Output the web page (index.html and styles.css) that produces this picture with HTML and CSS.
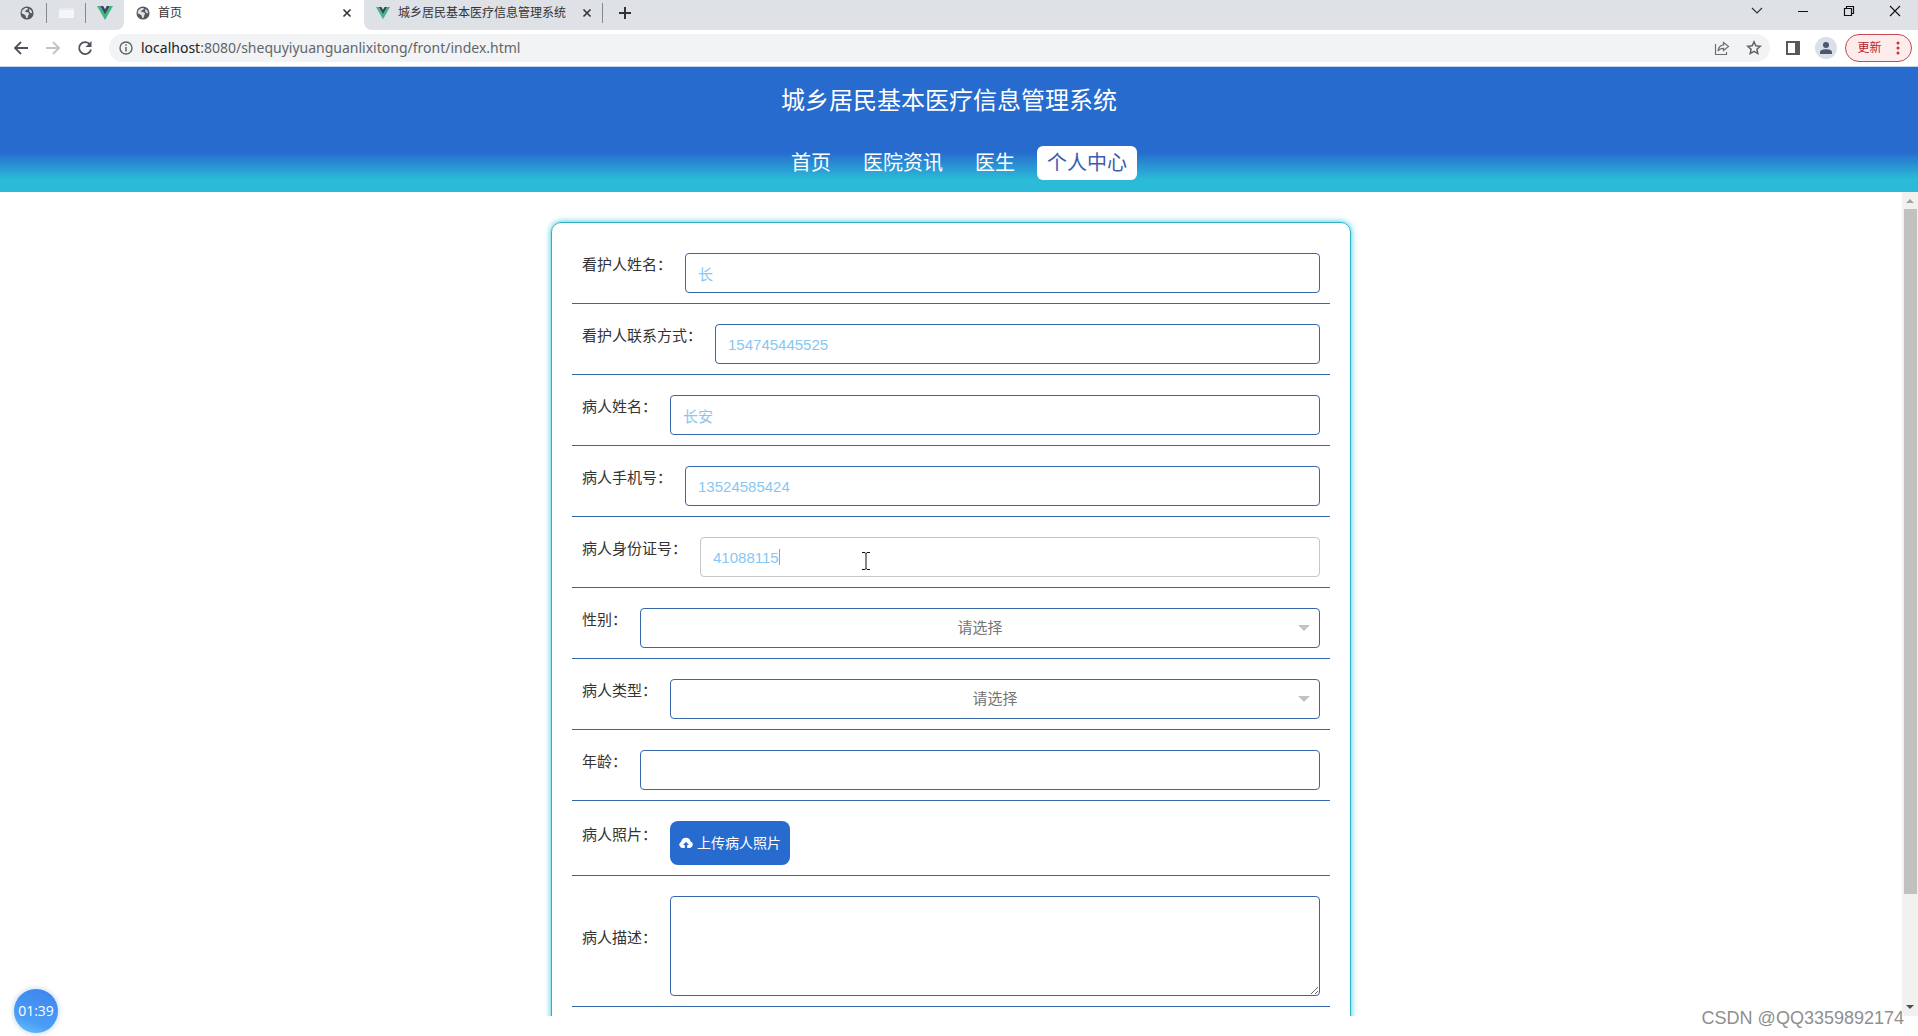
FILE: index.html
```html
<!DOCTYPE html>
<html lang="zh-CN">
<head>
<meta charset="utf-8">
<title>首页</title>
<link rel="stylesheet" href="styles.css">
</head>
<body>
<svg class="defs" aria-hidden="true">
  <symbol id="globe" viewBox="0 0 16 16"><circle cx="8" cy="8" r="7.5" fill="#565a5e"/><path d="M3 4.500 6 2.300 9 2.200 8.500 4 6.300 5.200 6 6.800 9 7 10.500 8.600 9.500 10.500 8.500 13.600 7 13.800 6.600 11 4.500 9.500 2 8.500 2 6.500ZM10.500 3 13 5 13.900 8 12.500 8.300 10.600 6.500Z" fill="#dee1e6"/></symbol>
  <symbol id="vue" viewBox="0 0 16 14"><path d="M0 0h3.200L8 8.300 12.800 0H16L8 14Z" fill="#41b883"/><path d="M3.200 0H6.200L8 3.200 9.800 0h3L8 8.400Z" fill="#34495e"/></symbol>
  <symbol id="close" viewBox="0 0 10 10"><path d="M1.500 1.500 8.500 8.500M8.500 1.500 1.500 8.500" stroke="#333" stroke-width="1.600"/></symbol>
</svg>

<div class="tabstrip">
  <div class="pins">
    <div class="pin"><svg class="i14"><use href="#globe"/></svg></div>
    <div class="pin"><span class="blank"></span></div>
    <div class="pin"><svg class="i16"><use href="#vue"/></svg></div>
  </div>
  <div class="tab active">
    <svg class="i14"><use href="#globe"/></svg><span>首页</span>
    <button aria-label="关闭"><svg class="i10"><use href="#close"/></svg></button>
  </div>
  <div class="tab">
    <svg class="i14"><use href="#vue"/></svg><span>城乡居民基本医疗信息管理系统</span>
    <button aria-label="关闭"><svg class="i10"><use href="#close"/></svg></button>
  </div>
  <button class="newtab" aria-label="新标签页"><svg class="i14" viewBox="0 0 14 14"><path d="M7 1v12M1 7h12" stroke="#333" stroke-width="2"/></svg></button>
  <div class="window-controls">
    <button aria-label="搜索标签页"><svg class="i12" viewBox="0 0 12 12"><path d="M1 3l5 5 5-5" fill="none" stroke="#333" stroke-width="1.200"/></svg></button>
    <button aria-label="最小化"><svg class="i12" viewBox="0 0 12 12"><path d="M1 6.500h10" stroke="#111"/></svg></button>
    <button aria-label="还原"><svg class="i12" viewBox="0 0 12 12"><path d="M1.500 3.500h7v7h-7zM3.500 3.500v-2h7v7h-2" fill="none" stroke="#111" stroke-width="1.200"/></svg></button>
    <button aria-label="关闭窗口"><svg class="i12" viewBox="0 0 12 12"><path d="M1 1l10 10M11 1 1 11" stroke="#111" stroke-width="1.100"/></svg></button>
  </div>
</div>

<div class="toolbar">
  <button aria-label="后退"><svg class="i16" viewBox="0 0 16 16"><path d="M15 8H2M8 2 2 8l6 6" fill="none" stroke="#50545a" stroke-width="1.800"/></svg></button>
  <button aria-label="前进"><svg class="i16" viewBox="0 0 16 16"><path d="M1 8h13M8 2l6 6-6 6" fill="none" stroke="#c0c2c5" stroke-width="1.800"/></svg></button>
  <button aria-label="刷新"><svg class="i16" viewBox="0 0 16 16"><path d="M13 4.500A6 6 0 1 0 14 9.500" fill="none" stroke="#50545a" stroke-width="1.800"/><path d="M14.500 1v6h-6z" fill="#50545a"/></svg></button>
  <div class="address">
    <svg class="i14" viewBox="0 0 14 14"><circle cx="7" cy="7" r="6" fill="none" stroke="#5f6368" stroke-width="1.400"/><path d="M7 6v4.500M7 3.300v1.500" stroke="#5f6368" stroke-width="1.500"/></svg>
    <span class="url"><b>localhost</b>:8080/shequyiyuanguanlixitong/front/index.html</span>
    <button aria-label="分享"><svg class="i16" viewBox="0 0 16 16"><path d="M1.500 4v10.500h11V12M9.500 2.500 14.500 6.500l-5 4V8.300C6.500 8.300 5 9.500 4 11c.3-3 2-5.800 5.500-6.200z" fill="none" stroke="#6b6e72" stroke-width="1.200"/></svg></button>
    <button aria-label="收藏"><svg class="i16" viewBox="0 0 16 16"><path d="m8 1.800 1.800 4 4.400.5-3.300 2.900.9 4.400L8 11.400l-3.800 2.200.9-4.400-3.300-2.900 4.400-.5z" fill="none" stroke="#5f6368" stroke-width="1.500"/></svg></button>
  </div>
  <button aria-label="侧边栏"><svg class="i14" viewBox="0 0 14 14"><path d="M1 1h12v12H1z" fill="#fff" stroke="#55585c" stroke-width="2"/><path d="M9 1h4v12H9z" fill="#55585c"/></svg></button>
  <button class="avatar" aria-label="用户"><svg class="i14" viewBox="0 0 14 14"><circle cx="7" cy="4" r="3" fill="#4c566e"/><path d="M1 13v-1.500C1 9 4 8.300 7 8.300s6 .7 6 3.200V13z" fill="#4c566e"/></svg></button>
  <button class="update">更新<svg class="dots" viewBox="0 0 4 14"><circle cx="2" cy="2" r="1.500"/><circle cx="2" cy="7" r="1.500"/><circle cx="2" cy="12" r="1.500"/></svg></button>
</div>

<header class="site-header">
  <h1>城乡居民基本医疗信息管理系统</h1>
  <nav>
    <a href="#">首页</a><a href="#">医院资讯</a><a href="#">医生</a><a href="#" class="current">个人中心</a>
  </nav>
</header>

<div class="viewport">
  <main>
    <form class="card">
      <div class="row"><label for="guardian">看护人姓名：</label><input id="guardian" type="text" value="长"></div>
      <div class="row"><label for="contact">看护人联系方式：</label><input id="contact" type="text" value="154745445525"></div>
      <div class="row"><label for="patient">病人姓名：</label><input id="patient" type="text" value="长安"></div>
      <div class="row"><label for="phone">病人手机号：</label><input id="phone" type="text" value="13524585424"></div>
      <div class="row"><label for="idcard">病人身份证号：</label><div class="control editing"><input id="idcard" type="text" value="41088115"><span class="caret"></span>
        <svg class="ibeam" viewBox="0 0 8 18"><path d="M0 .5h3l1 1 1-1h3M4 1v16M0 17.500h3l1-1 1 1h3" fill="none" stroke="#111"/></svg></div></div>
      <div class="row"><label for="gender">性别：</label><div class="control choice"><select id="gender"><option>请选择</option></select></div></div>
      <div class="row"><label for="type">病人类型：</label><div class="control choice"><select id="type"><option>请选择</option></select></div></div>
      <div class="row"><label for="age">年龄：</label><input id="age" type="text"></div>
      <div class="row photo"><label for="photo">病人照片：</label><button id="photo" class="upload" type="button"><svg class="i14" viewBox="0 0 14 14"><path d="M3.500 12A3.300 3.300 0 0 1 2.200 5.700 4.800 4.800 0 0 1 11.600 5.600 3.300 3.300 0 0 1 10.800 12H8.200V9H10L7 5.800 4 9h1.800v3z" fill="#fff"/></svg>上传病人照片</button></div>
      <div class="row tall"><label for="desc">病人描述：</label><textarea id="desc"></textarea></div>
      <div class="row"></div>
    </form>
  </main>
  <div class="scrollbar"><i class="up"></i><i class="thumb"></i><i class="down"></i></div>
</div>

<div class="timer">01:39</div>
<div class="watermark">CSDN @QQ3359892174</div>
</body>
</html>
```

FILE: styles.css
```css
* { box-sizing: border-box; }
body {
  margin: 0;
  height: 100vh;
  padding-bottom: 20px;
  display: flex;
  flex-direction: column;
  overflow: hidden;
  background: #fff;
  color: #333;
  font: 15px/24px "Liberation Sans", "Noto Sans CJK SC", sans-serif;
}
button { border: 0; padding: 0; background: none; font: inherit; color: inherit; display: flex; align-items: center; justify-content: center; }
svg { flex: none; display: block; }
.defs { position: absolute; width: 0; height: 0; }
.i10 { width: 10px; height: 10px; }
.i12 { width: 12px; height: 12px; }
.i14 { width: 14px; height: 14px; }
.i16 { width: 16px; height: 16px; }

/* browser tabs */
.tabstrip { flex: none; height: 30px; display: flex; background: #fff; }
.tabstrip > * { background: #dee1e6; }
.pins { display: flex; align-items: center; padding: 0 0 4px 7px; border-radius: 0 0 8px 0; }
.pin { width: 39px; height: 20px; display: flex; align-items: center; justify-content: center; }
.pin + .pin { border-left: 1px solid #85888c; }
.blank { width: 15px; height: 10px; background: #f4f6f7; border-top: 2px solid #e8eaed; }
.tab { width: 240px; display: flex; align-items: center; gap: 8px; padding: 0 12px 4px 12px; font-size: 12px; }
.tab.active { background: #fff; }
.tab button { margin-left: auto; }
.tab:not(.active) { border-radius: 0 0 0 8px; }
.tab span { white-space: nowrap; }
.newtab { padding: 0 14px 4px; }
.newtab::before { content: ""; height: 20px; border-left: 1px solid #85888c; margin-right: 15px; margin-left: -16px; }
.window-controls { flex: 1; display: flex; justify-content: flex-end; padding-bottom: 8px; }
.window-controls button { width: 46px; }

/* browser toolbar */
.toolbar { flex: none; height: 37px; display: flex; align-items: center; gap: 16px; padding: 0 6px 0 13px; border-bottom: 1px solid #c3d3ea; }
.address { flex: 1; height: 28px; display: flex; align-items: center; gap: 16px; padding: 0 8px; border-radius: 14px; background: #f1f3f4; }
.address .i14 { margin-left: 2px; }
.url { flex: 1; margin-left: -8px; font: 14px/24px "Noto Sans", sans-serif; color: #62666b; }
.url b { font-weight: 400; color: #222; }
.avatar { width: 22px; height: 22px; margin: 0 -8px 0 -1px; border-radius: 50%; background: #dadfe8; }
.update { height: 28px; width: 67px; gap: 14px; border: 1px solid #c5474f; border-radius: 14px; background: #fdecec; color: #b3262e; font-size: 12px; }
.dots { width: 4px; height: 14px; fill: #c5343c; }

/* site header */
.site-header { flex: none; height: 125px; display: flex; flex-direction: column; align-items: center; justify-content: space-between; padding: 17px 0 12px; background: linear-gradient(#276bce 0, #276bce 68%, #2bbbd8 90%); color: #fff; }
.site-header h1 { margin: 0 20px 0 0; font-size: 24px; line-height: 34px; font-weight: 400; }
.site-header nav { display: flex; gap: 12px; }
.site-header a { padding: 0 10px; border-radius: 6px; font-size: 20px; line-height: 34px; color: #fff; text-decoration: none; }
.site-header .current { background: #fff; color: #3d5cae; }

/* page area */
.viewport { flex: 1; min-height: 0; display: flex; }
main { flex: 1; overflow: hidden; padding-top: 30px; }
.card { width: 42%; min-width: 800px; margin: 0 auto; padding: 10px 20px; border: 1px solid #2fb0c4; border-radius: 10px; box-shadow: 0 0 6px #2bc4dc; }
.row { display: flex; align-items: flex-start; gap: 13px; min-height: 71px; padding: 20px 10px 10px; border-bottom: 1px solid #3768a8; }
.row label { flex: none; }
.photo label { padding-top: 2px; }
.tall label { padding-top: 30px; }
.row > input, .control, .row > textarea { flex: 1; min-width: 0; }
input, select, textarea { display: block; width: 100%; height: 40px; padding: 0 12px; border: 1px solid #3768a8; border-radius: 4px; outline: 0; background: #fff; color: #87c7f3; font: inherit; }
textarea { height: 100px; resize: vertical; }
.control { position: relative; }
.editing input { border-color: #c4c6ca; }
.caret { position: absolute; left: 79px; top: 12px; height: 16px; border-left: 1px solid #6aaede; }
.ibeam { position: absolute; left: 162px; top: 15px; width: 8px; height: 18px; }
select { appearance: none; text-align: center; text-align-last: center; color: #757575; }
.choice::after { content: ""; position: absolute; right: 10px; top: 17px; border: 6px solid transparent; border-top-color: #c2c2c2; border-bottom: 0; }
.upload { height: 44px; padding: 0 9px; gap: 4px; border-radius: 8px; background: #276bce; color: #fff; font-size: 14px; }

.scrollbar { width: 16px; display: flex; flex-direction: column; align-items: center; padding: 7px 0; background: #f1f1f1; }
.scrollbar .thumb { width: 13px; height: 685px; margin: 6px 0 auto; background: #c1c1c1; }
.up, .down { border: 4px solid transparent; }
.up { border-top: 0; border-bottom-color: #a3a3a3; }
.down { border-bottom: 0; border-top-color: #505050; }

/* overlays */
.timer { position: absolute; left: 13px; bottom: 2px; width: 46px; height: 46px; border: 1px solid #d9effc; border-radius: 50%; background: linear-gradient(200deg, #3e83ee, #4a9df5 70%, #6cc4fb); box-shadow: 0 0 5px #cfd8e0; color: #fff; font: 14px/44px "Open Sans", sans-serif; text-align: center; }
.watermark { position: absolute; right: 14px; bottom: 6px; color: #8f8f8f; font-size: 18px; line-height: 24px; text-shadow: 1px 1px 0 #fff; }
```
